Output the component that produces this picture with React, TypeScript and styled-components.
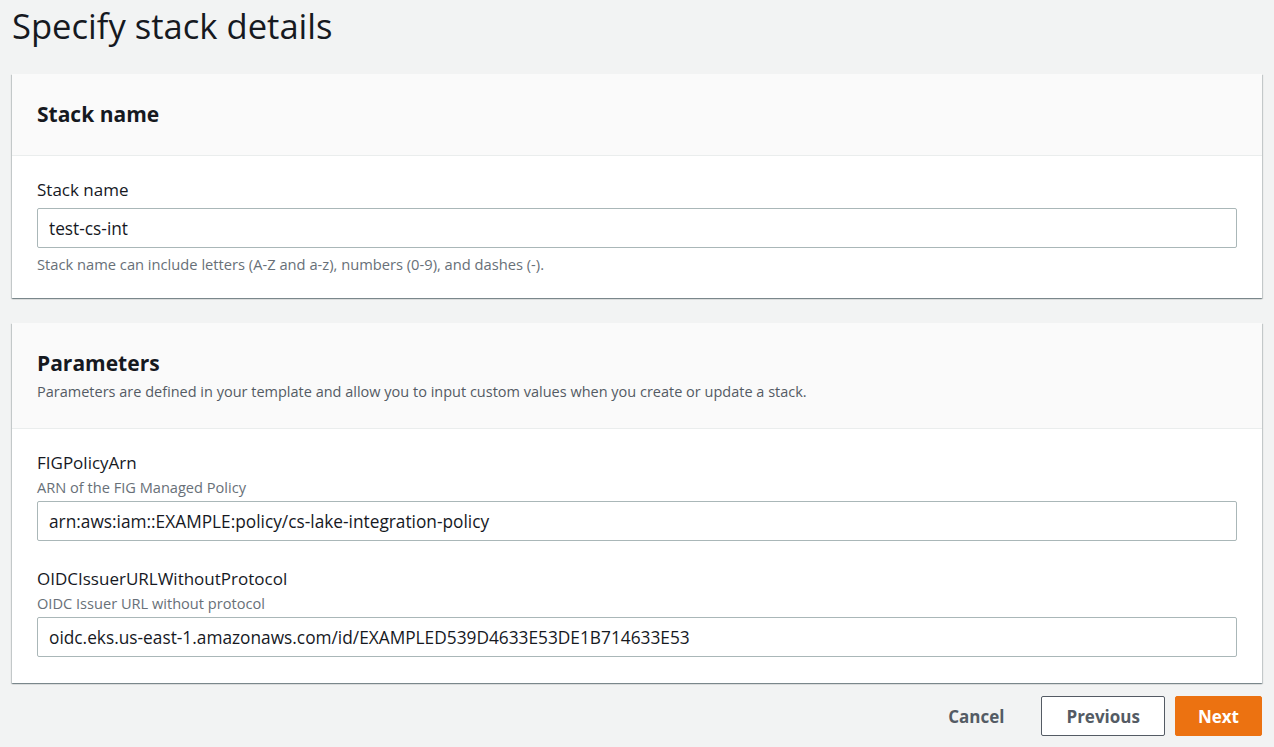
import React from "react";
import styled, { createGlobalStyle } from "styled-components";

const GlobalStyle = createGlobalStyle`
  html, body {
    margin: 0;
    padding: 0;
    background: #f2f3f3;
    font-family: "Open Sans", "Noto Sans", sans-serif;
    color: #16191f;
  }
  * { box-sizing: border-box; }
`;

const Page = styled.main`
  padding: 0 12px 12px;
`;

const Title = styled.h1`
  margin: 6px 0 28px;
  font-size: 34.6px;
  line-height: 40px;
  font-weight: 400;
  color: #16191f;
`;

const Card = styled.section<{ $last?: boolean }>`
  background: #ffffff;
  box-shadow: 0 1px 1px 0 rgba(0, 28, 36, 0.3), 1px 1px 1px 0 rgba(0, 28, 36, 0.15),
    -1px 1px 1px 0 rgba(0, 28, 36, 0.15);
  margin-bottom: ${(p) => (p.$last ? "13px" : "25px")};
`;

const CardHeader = styled.header`
  background: #fafafa;
  border-bottom: 1px solid #eaeded;
  padding: 26px 25px 27px;
`;

const Heading = styled.h2`
  margin: 0;
  font-size: 21px;
  line-height: 28px;
  font-weight: 700;
  color: #16191f;
`;

const HeaderDesc = styled.p`
  margin: 6px 0 0;
  font-size: 14.5px;
  line-height: 18px;
  color: #545b64;
`;

const CardBody = styled.div<{ $gap?: number }>`
  padding: 23px 25px 26px;
  display: flex;
  flex-direction: column;
  gap: ${(p) => p.$gap ?? 27}px;
`;

const Field = styled.div`
  display: flex;
  flex-direction: column;
`;

const Label = styled.label`
  font-size: 17px;
  line-height: 22px;
  color: #16191f;
`;

const FieldDesc = styled.div`
  margin-top: 4px;
  font-size: 14.6px;
  line-height: 18px;
  color: #687078;
`;

const Input = styled.input<{ $gap: number }>`
  margin-top: ${(p) => p.$gap}px;
  width: 100%;
  height: 40px;
  border: 1px solid #aab7b8;
  border-radius: 2px;
  padding: 0 11px;
  font-family: "Open Sans", "Noto Sans", sans-serif;
  font-size: 17.3px;
  color: #16191f;
  background: #ffffff;
  outline: none;
`;

const Hint = styled.div`
  margin-top: 8px;
  font-size: 14.7px;
  line-height: 16px;
  color: #687078;
`;

const Footer = styled.div`
  display: flex;
  justify-content: flex-end;
  align-items: center;
  gap: 10px;
`;

type Variant = "link" | "normal" | "primary";

const Button = styled.button<{ $variant: Variant; $pad: number }>`
  height: 40px;
  padding: 0 ${(p) => p.$pad}px;
  border-radius: 2px;
  font-family: "Open Sans", "Noto Sans", sans-serif;
  font-size: 17px;
  font-weight: 700;
  cursor: pointer;
  border: 1px solid
    ${(p) =>
      p.$variant === "primary" ? "#ec7211" : p.$variant === "normal" ? "#545b64" : "transparent"};
  background: ${(p) =>
    p.$variant === "primary" ? "#ec7211" : p.$variant === "normal" ? "#ffffff" : "transparent"};
  color: ${(p) => (p.$variant === "primary" ? "#ffffff" : "#545b64")};
`;

const params = [
  {
    name: "FIGPolicyArn",
    desc: "ARN of the FIG Managed Policy",
    value: "arn:aws:iam::EXAMPLE:policy/cs-lake-integration-policy",
  },
  {
    name: "OIDCIssuerURLWithoutProtocol",
    desc: "OIDC Issuer URL without protocol",
    value: "oidc.eks.us-east-1.amazonaws.com/id/EXAMPLED539D4633E53DE1B714633E53",
  },
];

export default function App() {
  return (
    <>
      <GlobalStyle />
      <Page>
        <Title>Specify stack details</Title>

        <Card>
          <CardHeader>
            <Heading>Stack name</Heading>
          </CardHeader>
          <CardBody>
            <Field>
              <Label>Stack name</Label>
              <Input $gap={7} readOnly value="test-cs-int" />
              <Hint>Stack name can include letters (A-Z and a-z), numbers (0-9), and dashes (-).</Hint>
            </Field>
          </CardBody>
        </Card>

        <Card $last>
          <CardHeader>
            <Heading>Parameters</Heading>
            <HeaderDesc>
              Parameters are defined in your template and allow you to input custom values when you create or
              update a stack.
            </HeaderDesc>
          </CardHeader>
          <CardBody $gap={27}>
            {params.map((p) => (
              <Field key={p.name}>
                <Label>{p.name}</Label>
                <FieldDesc>{p.desc}</FieldDesc>
                <Input $gap={5} readOnly value={p.value} />
              </Field>
            ))}
          </CardBody>
        </Card>

        <Footer>
          <Button $variant="link" $pad={26}>
            Cancel
          </Button>
          <Button $variant="normal" $pad={24}>
            Previous
          </Button>
          <Button $variant="primary" $pad={22}>
            Next
          </Button>
        </Footer>
      </Page>
    </>
  );
}
